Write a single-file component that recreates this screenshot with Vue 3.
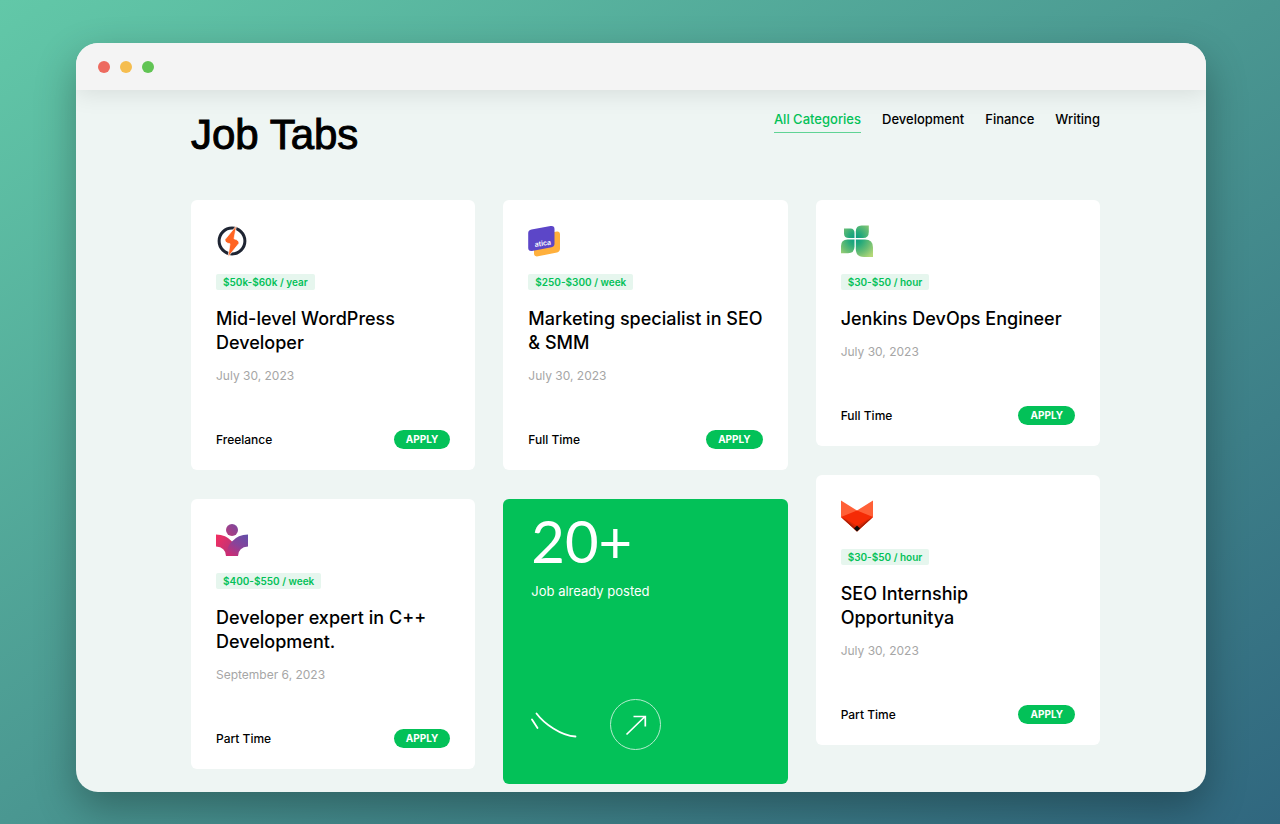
<script setup>
import { ref } from 'vue';

const tabs = ['All Categories', 'Development', 'Finance', 'Writing']
const activeTab = ref('All Categories')

const columns = [
  [
    { id: 1, logo: 'bolt', salary: '$50k-$60k / year', title: 'Mid-level WordPress Developer', date: 'July 30, 2023', type: 'Freelance' },
    { id: 2, logo: 'reader', salary: '$400-$550 / week', title: 'Developer expert in C++ Development.', date: 'September 6, 2023', type: 'Part Time' },
  ],
  [
    { id: 3, logo: 'atica', salary: '$250-$300 / week', title: 'Marketing specialist in SEO & SMM', date: 'July 30, 2023', type: 'Full Time' },
    { id: 4, counter: true },
  ],
  [
    { id: 5, logo: 'clover', salary: '$30-$50 / hour', title: 'Jenkins DevOps Engineer', date: 'July 30, 2023', type: 'Full Time' },
    { id: 6, logo: 'fox', salary: '$30-$50 / hour', title: 'SEO Internship Opportunitya', date: 'July 30, 2023', type: 'Part Time' },
  ],
]
</script>

<template>
  <div class="desktop">
    <div class="window">
      <div class="window-bar">
        <span class="dot dot-red"></span>
        <span class="dot dot-yellow"></span>
        <span class="dot dot-green"></span>
      </div>

      <main class="page">
        <header class="page-top">
          <h1 class="page-title">Job Tabs</h1>
          <nav class="tabs">
            <button
              v-for="tab in tabs"
              :key="tab"
              class="tab"
              :class="{ active: tab === activeTab }"
              @click="activeTab = tab"
            >{{ tab }}</button>
          </nav>
        </header>

        <div class="columns">
          <div v-for="(column, i) in columns" :key="i" class="column">
            <template v-for="job in column" :key="job.id">
              <section v-if="job.counter" class="counter">
                <div class="counter-number">20+</div>
                <p class="counter-text">Job already posted</p>
                <div class="counter-bottom">
                  <svg class="counter-line" width="46" height="26" viewBox="0 0 46 26" fill="none" stroke="#fff" stroke-width="1.8" stroke-linecap="round">
                    <path d="M1 7.5L6.5 16" />
                    <path d="M5.500 1.500C13 11.500 30 24 44.500 24.500" />
                  </svg>
                  <a href="#" class="counter-link" aria-label="See all jobs">
                    <svg width="22" height="22" viewBox="0 0 22 22" fill="none" stroke="#fff" stroke-width="1.700">
                      <path d="M1.500 20.500L20 2.500M8.500 2.500H20.300V12.500" />
                    </svg>
                  </a>
                </div>
              </section>

              <article v-else class="job">
                <svg v-if="job.logo === 'bolt'" class="job-logo" viewBox="0 0 32 32">
                  <circle cx="16" cy="16" r="12.900" fill="none" stroke="#1f2533" stroke-width="3" />
                  <path d="M20.500 0.500L9 14.500Q8.500 17.800 14 18.800L12 32L22.800 18.500Q23.800 15.500 18 13.700Z" fill="#ff6422" stroke="#fff" stroke-width="0.700" stroke-linejoin="round" />
                </svg>

                <svg v-else-if="job.logo === 'atica'" class="job-logo" viewBox="0 0 32 32">
                  <path d="M9 10L29 6.500Q32 6.300 32 9.500V23.500Q32 26.500 29 27.500L10 31.300Q6 32 6 28.500V13Q6 10.500 9 10Z" fill="#ffb03c" />
                  <path d="M3.500 4.500L22.500 1.100Q26.500 0.500 26.500 4V18.500Q26.500 21.600 23.500 22.300L4 25.900Q0.200 26.300 0.200 23V8Q0.200 5 3.500 4.500Z" fill="#5c46c8" />
                  <text class="atica-text" x="7" y="22" transform="rotate(-8 7 22)">atica</text>
                </svg>

                <svg v-else-if="job.logo === 'clover'" class="job-logo" viewBox="0 0 32 32">
                  <defs>
                    <radialGradient id="leaf" gradientUnits="userSpaceOnUse" cx="14.500" cy="13.500" r="23">
                      <stop offset="0" stop-color="#079b82" />
                      <stop offset="0.300" stop-color="#27aa7a" />
                      <stop offset="0.650" stop-color="#69bd74" />
                      <stop offset="1" stop-color="#b4d878" />
                    </radialGradient>
                  </defs>
                  <path d="M3 3.500H9.500Q13.500 3.500 13.500 8V13H8Q3 13 3 8.500Z" fill="url(#leaf)" />
                  <path d="M27.800 0.500H20.500Q14.800 0.500 14.800 6.500V13H22Q27.800 13 27.800 7Z" fill="url(#leaf)" />
                  <path d="M0 28.200V21Q0 14.400 6.500 14.400H13.500V21.500Q13.500 28.200 7 28.200Z" fill="url(#leaf)" />
                  <path d="M14.800 14.400H24Q32 14.400 32 22.500V32H23Q14.800 32 14.800 24Z" fill="url(#leaf)" />
                </svg>

                <svg v-else-if="job.logo === 'reader'" class="job-logo" viewBox="0 0 32 32">
                  <defs>
                    <linearGradient id="page-left" x1="0" y1="0.200" x2="1" y2="0.800">
                      <stop offset="0" stop-color="#ef2f63" />
                      <stop offset="1" stop-color="#a9367f" />
                    </linearGradient>
                    <linearGradient id="page-right" x1="0.900" y1="0" x2="0.200" y2="1">
                      <stop offset="0" stop-color="#654ea8" />
                      <stop offset="0.500" stop-color="#88439a" />
                      <stop offset="1" stop-color="#cf2b72" />
                    </linearGradient>
                    <linearGradient id="head" x1="0" y1="1" x2="1" y2="0">
                      <stop offset="0" stop-color="#b93a7b" />
                      <stop offset="1" stop-color="#7849a0" />
                    </linearGradient>
                  </defs>
                  <circle cx="16" cy="6" r="6" fill="url(#head)" />
                  <path d="M0 10.500Q10 10.500 16 17.500L22 26V32H10Q9.500 23 0 22.500Z" fill="url(#page-left)" />
                  <path d="M32 10.500Q22 10.500 16 17.500Q11 22 10 32H22Q22.500 23 32 22.500Z" fill="url(#page-right)" />
                </svg>

                <svg v-else class="job-logo" viewBox="0 0 32 32">
                  <path d="M0 0.500L16 10.500L32 0.500V17L16 31.500L0 17Z" fill="#ff6037" />
                  <path d="M0 17L16 10.500L32 17L16 31.500Z" fill="#f52b05" />
                  <path d="M0 17L16 26.500L32 17L16 31.500Z" fill="#a92008" />
                  <path d="M3 18L16 26L29 18L21 25L16 29L11 25Z" fill="#d92806" />
                  <path d="M16 25.500L19 28.500L16 31.500L13 28.500Z" fill="#0b0b0b" />
                </svg>

                <span class="job-salary">{{ job.salary }}</span>
                <h2 class="job-title">{{ job.title }}</h2>
                <p class="job-date">{{ job.date }}</p>
                <div class="job-bottom">
                  <span class="job-type">{{ job.type }}</span>
                  <button class="job-apply">APPLY</button>
                </div>
              </article>
            </template>
          </div>
        </div>
      </main>
    </div>
  </div>
</template>

<style>
body {
  margin: 0;
}
</style>

<style scoped>
.desktop {
  box-sizing: border-box;
  min-height: 100vh;
  padding: 43px 74px 32px 76px;
  background: linear-gradient(to bottom right, #62c8a8 0%, #4a9791 50%, #30677f 100%);
  font-family: Inter, "Liberation Sans", sans-serif;
  color: #000;
}

.window {
  border-radius: 22px;
  overflow: hidden;
  background-color: #eef5f3;
  box-shadow: 0 16px 40px rgba(0, 0, 0, .3);
}

.window-bar {
  position: relative;
  display: flex;
  align-items: center;
  gap: 10px;
  height: 47px;
  padding: 1px 22px 0;
  box-sizing: border-box;
  background-color: #f4f4f4;
  box-shadow: 0 3px 24px rgba(0, 0, 0, .1);
}

.dot {
  width: 12px;
  height: 12px;
  border-radius: 50%;
}

.dot-red {
  background-color: #ed6a5f;
}

.dot-yellow {
  background-color: #f5bd4f;
}

.dot-green {
  background-color: #61c454;
}

.page {
  padding: 20px 106px 8px 115px;
}

.page-top {
  display: flex;
  justify-content: space-between;
  align-items: flex-start;
  height: 90px;
}

.page-title {
  margin: 0;
  font-family: "Liberation Sans", Arial, sans-serif;
  font-size: 42px;
  line-height: 50px;
  font-weight: 400;
  -webkit-text-stroke: 1px #000;
}

.tabs {
  display: flex;
  gap: 21px;
}

.tab {
  padding: 0 0 3px;
  border: none;
  border-bottom: 1px solid transparent;
  background: none;
  font-family: inherit;
  font-size: 13px;
  line-height: 19px;
  font-weight: 500;
  color: #000;
  cursor: pointer;
}

.tab.active {
  color: #03c158;
  border-bottom-color: #5fd394;
}

.columns {
  display: grid;
  grid-template-columns: repeat(3, 1fr);
  align-items: start;
  gap: 28px;
}

.column {
  display: flex;
  flex-direction: column;
  gap: 29px;
}

.job {
  display: flex;
  flex-direction: column;
  align-items: flex-start;
  padding: 25px 25px 21px;
  border-radius: 6px;
  background-color: #fff;
}

.job-logo {
  width: 32px;
  height: 32px;
  margin-bottom: 17px;
}

.atica-text {
  font-size: 7px;
  font-weight: 600;
  fill: #fff;
}

.job-salary {
  padding: 0 7px;
  border-radius: 2px;
  background-color: #e6f6ee;
  color: #03c158;
  font-size: 10px;
  line-height: 16px;
  font-weight: 600;
}

.job-title {
  margin: 17px 0 12px;
  font-size: 18px;
  line-height: 24px;
  font-weight: 500;
}

.job-date {
  margin: 0;
  font-size: 12px;
  line-height: 18px;
  color: #a6a6a6;
}

.job-bottom {
  display: flex;
  justify-content: space-between;
  align-items: center;
  width: 100%;
  margin-top: 45px;
}

.job-type {
  font-size: 12px;
  line-height: 18px;
  font-weight: 500;
}

.job-apply {
  padding: 0 12px;
  border: none;
  border-radius: 10px;
  background-color: #03c158;
  color: #fff;
  font-family: inherit;
  font-size: 10px;
  line-height: 19px;
  font-weight: 700;
  cursor: pointer;
}

.job-apply:hover {
  background-color: #02a54b;
}

.counter {
  padding: 12px 28px 34px;
  border-radius: 6px;
  background-color: #03c158;
  color: #fff;
}

.counter-number {
  font-family: Lato, sans-serif;
  font-size: 58px;
  line-height: 60px;
}

.counter-text {
  margin: 10px 0 98px;
  font-size: 13px;
  line-height: 20px;
}

.counter-bottom {
  display: flex;
  align-items: center;
  gap: 33px;
}

.counter-link {
  display: flex;
  align-items: center;
  justify-content: center;
  box-sizing: border-box;
  width: 51px;
  height: 51px;
  border: 1px solid #b5ecce;
  border-radius: 50%;
}
</style>
